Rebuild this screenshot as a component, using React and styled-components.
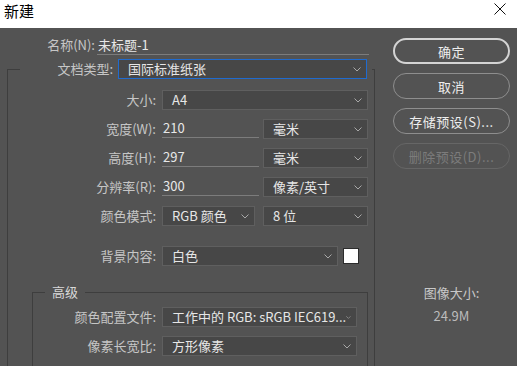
import styled, { createGlobalStyle } from 'styled-components';

const GlobalStyle = createGlobalStyle`
  html, body {
    margin: 0;
    padding: 0;
    background: #535353;
  }
  body {
    font-family: "Noto Sans CJK SC", "Microsoft YaHei", sans-serif;
    font-size: 13px;
  }
`;

const Window = styled.div`
  width: 517px;
  height: 366px;
  overflow: hidden;
  display: flex;
  flex-direction: column;
`;

const TitleBar = styled.div`
  height: 28px;
  flex: none;
  background: #ffffff;
  display: flex;
  align-items: flex-start;
  justify-content: space-between;
  padding: 0 11px 0 4px;
  box-sizing: border-box;
`;

const Title = styled.div`
  font-size: 15px;
  line-height: 22px;
  color: #000;
`;

const CloseBtn = styled.svg`
  margin-top: 3px;
`;

const Body = styled.div`
  flex: 1;
  display: flex;
  padding: 8px 7px 0 7px;
  background: #535353;
`;

const LeftCol = styled.div`
  width: 368px;
  flex: none;
`;

const RightCol = styled.div`
  width: 117px;
  flex: none;
  margin-left: 18px;
  padding-top: 2px;
`;

const NameRow = styled.div`
  display: flex;
  height: 19px;
`;

const Label = styled.div`
  width: ${(p) => p.$w}px;
  flex: none;
  text-align: right;
  color: #c6c6c6;
  white-space: nowrap;
  line-height: 18px;
`;

const TextInput = styled.div`
  width: ${(p) => p.$w}px;
  height: 19px;
  margin-left: ${(p) => p.$ml}px;
  align-self: flex-start;
  box-sizing: border-box;
  border-bottom: 1px solid #7c7c7c;
  padding-left: 1px;
  line-height: 18px;
  color: #e8e8e8;
`;

const Group = styled.fieldset`
  margin: ${(p) => p.$mt}px ${(p) => p.$mr}px 0 ${(p) => p.$ml}px;
  padding: ${(p) => p.$pt}px 0 40px 0;
  border: 1px solid #3e3e3e;
  min-width: 0;
`;

const Legend = styled.legend`
  margin-left: 12px;
  padding: ${(p) => (p.$text ? '0 7px' : '0')};
  color: #d8d8d8;
  line-height: 16px;
`;

const LegendRow = styled.div`
  display: flex;
  align-items: center;
  width: 352px;
  height: 20px;
`;

const Row = styled.div`
  display: flex;
  align-items: center;
  height: 20px;
  margin-top: ${(p) => p.$gap ?? 9}px;
`;

const Select = styled.div`
  width: ${(p) => p.$w}px;
  height: 20px;
  flex: none;
  margin-left: ${(p) => p.$ml ?? 0}px;
  box-sizing: border-box;
  border: 1px solid ${(p) => (p.$focus ? '#1f6bd0' : '#5f5f5f')};
  background: #474747;
  display: flex;
  align-items: center;
  justify-content: space-between;
  padding: 0 5px 0 9px;
  color: #e6e6e6;
  white-space: nowrap;
  overflow: hidden;
`;

const SelectText = styled.span`
  line-height: 18px;
`;

const Swatch = styled.div`
  width: 16px;
  height: 16px;
  margin-left: 5px;
  box-sizing: border-box;
  background: #ffffff;
  border: 1px solid #2c2c2c;
`;

const Button = styled.div`
  height: 26px;
  box-sizing: border-box;
  border-radius: 13px;
  border: ${(p) => (p.$primary ? '2px solid #d4d4d4' : `1px solid ${p.$disabled ? '#666666' : '#8e8e8e'}`)};
  display: flex;
  align-items: center;
  justify-content: center;
  color: ${(p) => (p.$disabled ? '#7c7c7c' : '#ededed')};
  margin-top: ${(p) => (p.$first ? 0 : 9)}px;
  letter-spacing: 0.5px;
`;

const SizeInfo = styled.div`
  margin-top: 116px;
  text-align: center;
  color: #c8c8c8;
  line-height: 16px;
`;

const SizeValue = styled.div`
  margin-top: 7px;
  color: #bcbcbc;
`;

function Chevron() {
  return (
    <svg width="8" height="5" viewBox="0 0 8 5">
      <polyline points="0.5,0.5 4,4 7.5,0.5" fill="none" stroke="#a8a8a8" strokeWidth="1" />
    </svg>
  );
}

function Dropdown({ w, ml, focus, children }) {
  return (
    <Select $w={w} $ml={ml} $focus={focus}>
      <SelectText>{children}</SelectText>
      <Chevron />
    </Select>
  );
}

export default function App() {
  return (
    <Window>
      <GlobalStyle />
      <TitleBar>
        <Title>新建</Title>
        <CloseBtn width="12" height="12" viewBox="0 0 12 12">
          <line x1="0.5" y1="0.5" x2="11.5" y2="11.5" stroke="#111" strokeWidth="1" />
          <line x1="11.5" y1="0.5" x2="0.5" y2="11.5" stroke="#111" strokeWidth="1" />
        </CloseBtn>
      </TitleBar>
      <Body>
        <LeftCol>
          <NameRow>
            <Label $w={88}>名称(N):</Label>
            <TextInput $w={272} $ml={2}>未标题-1</TextInput>
          </NameRow>
          <Group $mt={4} $ml={0} $mr={0} $pt={11}>
            <Legend>
              <LegendRow>
                <Label $w={93}>文档类型:</Label>
                <Dropdown w={249} ml={5} focus>国际标准纸张</Dropdown>
              </LegendRow>
            </Legend>
            <Row $gap={0}>
              <Label $w={148}>大小:</Label>
              <Dropdown w={206} ml={6}>A4</Dropdown>
            </Row>
            <Row>
              <Label $w={148}>宽度(W):</Label>
              <TextInput $w={97} $ml={6}>210</TextInput>
              <Dropdown w={105} ml={4}>毫米</Dropdown>
            </Row>
            <Row>
              <Label $w={148}>高度(H):</Label>
              <TextInput $w={97} $ml={6}>297</TextInput>
              <Dropdown w={105} ml={4}>毫米</Dropdown>
            </Row>
            <Row>
              <Label $w={148}>分辨率(R):</Label>
              <TextInput $w={97} $ml={6}>300</TextInput>
              <Dropdown w={105} ml={4}>像素/英寸</Dropdown>
            </Row>
            <Row>
              <Label $w={148}>颜色模式:</Label>
              <Dropdown w={93} ml={6}>RGB 颜色</Dropdown>
              <Dropdown w={105} ml={8}>8 位</Dropdown>
            </Row>
            <Row $gap={20}>
              <Label $w={148}>背景内容:</Label>
              <Dropdown w={176} ml={6}>白色</Dropdown>
              <Swatch />
            </Row>
            <Group $mt={18} $ml={24} $mr={6} $pt={7}>
              <Legend $text>高级</Legend>
              <Row $gap={0}>
                <Label $w={123}>颜色配置文件:</Label>
                <Dropdown w={195} ml={6}>工作中的 RGB: sRGB IEC619...</Dropdown>
              </Row>
              <Row>
                <Label $w={123}>像素长宽比:</Label>
                <Dropdown w={195} ml={6}>方形像素</Dropdown>
              </Row>
            </Group>
          </Group>
        </LeftCol>
        <RightCol>
          <Button $primary $first>确定</Button>
          <Button>取消</Button>
          <Button>存储预设(S)...</Button>
          <Button $disabled>删除预设(D)...</Button>
          <SizeInfo>
            图像大小:
            <SizeValue>24.9M</SizeValue>
          </SizeInfo>
        </RightCol>
      </Body>
    </Window>
  );
}
